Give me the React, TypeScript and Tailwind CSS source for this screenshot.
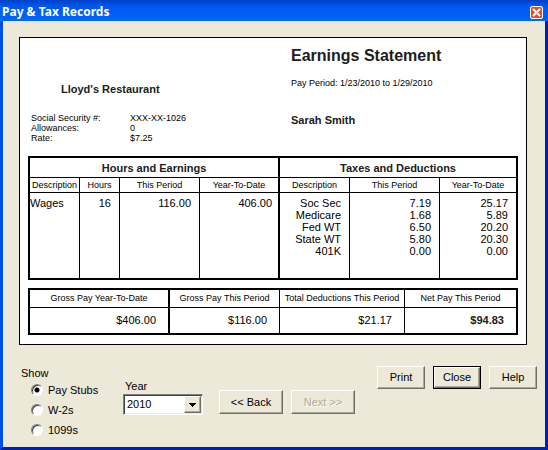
import { useState } from "react";
import type { ReactNode } from "react";

const earnings = [{ name: "Wages", hours: "16", period: "116.00", ytd: "406.00" }];

const deductions = [
  { name: "Soc Sec", period: "7.19", ytd: "25.17" },
  { name: "Medicare", period: "1.68", ytd: "5.89" },
  { name: "Fed WT", period: "6.50", ytd: "20.20" },
  { name: "State WT", period: "5.80", ytd: "20.30" },
  { name: "401K", period: "0.00", ytd: "0.00" },
];

const raised =
  "border border-t-white border-l-white border-r-[#716f64] border-b-[#716f64] shadow-[inset_-1px_-1px_0_#aca899]";

function PushButton({
  children,
  size,
  primary = false,
  disabled = false,
}: {
  children: ReactNode;
  size: string;
  primary?: boolean;
  disabled?: boolean;
}) {
  const face = `flex h-full w-full items-center justify-center bg-[#ece9d8] ${raised}`;
  const text = disabled ? "text-[#aca899] [text-shadow:1px_1px_0_white]" : "text-black";
  return (
    <button
      type="button"
      disabled={disabled}
      className={`${size} shrink-0 text-[11px] ${text} ${primary ? "border border-black" : ""}`}
    >
      <span className={face}>{children}</span>
    </button>
  );
}

function TitleBar() {
  return (
    <header className="-mx-[3px] flex h-[21px] items-center justify-between bg-linear-to-b from-[#0040c8] via-[#0058ee] via-30% to-[#0066ff] pt-[3px] pr-[5px] pl-[2px]">
      <h1 className="font-['Noto_Sans','Open_Sans',sans-serif] text-xs font-bold text-white">
        Pay &amp; Tax Records
      </h1>
      <button
        type="button"
        aria-label="Close window"
        className="flex size-[13px] items-center justify-center rounded-xs border border-white bg-[#e0502c]"
      >
        <svg viewBox="0 0 9 9" className="size-[9px]" stroke="white" strokeWidth="2">
          <path d="M1 1 L8 8 M8 1 L1 8" />
        </svg>
      </button>
    </header>
  );
}

function PayTable() {
  const line = "border-r border-black";
  const thick = "border-r-2 border-black";
  const title = "h-5 border-b border-black p-0 pt-px text-[11px] leading-4 font-bold text-[#202020]";
  const head = "h-[15px] border-b border-black p-0 text-[9px] leading-[14px] font-normal";
  return (
    <table className="w-full table-fixed border-separate border-spacing-0 border-2 border-black text-[11px] leading-3">
      <colgroup>
        <col className="w-[50px]" />
        <col className="w-[40px]" />
        <col className="w-[80px]" />
        <col className="w-[80px]" />
        <col className="w-[70px]" />
        <col className="w-[90px]" />
        <col />
      </colgroup>
      <thead>
        <tr>
          <th colSpan={4} className={`${title} ${thick}`}>Hours and Earnings</th>
          <th colSpan={3} className={title}>Taxes and Deductions</th>
        </tr>
        <tr>
          <th className={`${head} ${line}`}>Description</th>
          <th className={`${head} ${line}`}>Hours</th>
          <th className={`${head} ${line}`}>This Period</th>
          <th className={`${head} ${thick}`}>Year-To-Date</th>
          <th className={`${head} ${line}`}>Description</th>
          <th className={`${head} ${line}`}>This Period</th>
          <th className={head}>Year-To-Date</th>
        </tr>
      </thead>
      <tbody className="[&>tr:first-child>td]:pt-1 [&>tr:last-child>td]:pb-[21px]">
        {deductions.map((d, i) => {
          const e = earnings[i];
          return (
            <tr key={d.name} className="text-right">
              <td className={`${line} p-0 text-left`}>{e?.name}</td>
              <td className={`${line} p-0 pr-2`}>{e?.hours}</td>
              <td className={`${line} p-0 pr-2`}>{e?.period}</td>
              <td className={`${thick} p-0 pr-1.5`}>{e?.ytd}</td>
              <td className={`${line} p-0 pr-2`}>{d.name}</td>
              <td className={`${line} p-0 pr-2`}>{d.period}</td>
              <td className="p-0 pr-2">{d.ytd}</td>
            </tr>
          );
        })}
      </tbody>
    </table>
  );
}

function SummaryTable() {
  const head = "h-[18px] border-b border-black p-0 text-[9px] leading-[17px] font-normal whitespace-nowrap";
  const line = "border-r border-black";
  const thick = "border-r-2 border-black";
  return (
    <table className="mt-2 w-full table-fixed border-separate border-spacing-0 border-2 border-black text-[11px]">
      <colgroup>
        <col className="w-[140px]" />
        <col className="w-[110px]" />
        <col className="w-[125px]" />
        <col />
      </colgroup>
      <thead>
        <tr>
          <th className={`${head} ${thick}`}>Gross Pay Year-To-Date</th>
          <th className={`${head} ${line}`}>Gross Pay This Period</th>
          <th className={`${head} ${line}`}>Total Deductions This Period</th>
          <th className={head}>Net Pay This Period</th>
        </tr>
      </thead>
      <tbody>
        <tr className="h-[25px] text-right">
          <td className={`${thick} p-0 pr-3`}>$406.00</td>
          <td className={`${line} p-0 pr-3`}>$116.00</td>
          <td className={`${line} p-0 pr-3`}>$21.17</td>
          <td className="p-0 pr-3 font-bold text-[#202020]">$94.83</td>
        </tr>
      </tbody>
    </table>
  );
}

function Statement() {
  return (
    <section className="mx-4 mr-[18px] mt-4 border border-black bg-white px-2 pb-[9px]">
      <div className="grid h-[118px] grid-cols-[263px_1fr] text-[9px] leading-[10px]">
        <div className="pt-[43px] pl-[3px]">
          <h2 className="pl-[30px] text-[11px] leading-4 font-bold text-[#202020]">Lloyd's Restaurant</h2>
          <dl className="mt-4 grid grid-cols-[99px_1fr]">
            <dt>Social Security #:</dt>
            <dd>XXX-XX-1026</dd>
            <dt>Allowances:</dt>
            <dd>0</dd>
            <dt>Rate:</dt>
            <dd>$7.25</dd>
          </dl>
        </div>
        <div className="pt-2">
          <h2 className="text-base leading-5 font-bold text-[#202020]">Earnings Statement</h2>
          <p className="mt-3">Pay Period: 1/23/2010 to 1/29/2010</p>
          <p className="mt-6 text-[11px] leading-4 font-bold text-[#202020]">Sarah Smith</p>
        </div>
      </div>
      <PayTable />
      <SummaryTable />
    </section>
  );
}

function Controls() {
  const [show, setShow] = useState("Pay Stubs");
  return (
    <form className="flex items-start pt-[21px] pr-2 pl-[18px] text-[11px]">
      <fieldset className="w-[102px] shrink-0">
        <legend className="leading-[14px]">Show</legend>
        <div className="flex flex-col pl-[10px]">
          {["Pay Stubs", "W-2s", "1099s"].map((name) => (
            <label key={name} className="flex h-5 items-center gap-[5px]">
              <input
                type="radio"
                name="show"
                checked={show === name}
                onChange={() => setShow(name)}
                className="size-3 appearance-none rounded-full border border-t-[#808080] border-r-white border-b-white border-l-[#808080] bg-white shadow-[inset_1px_1px_0_#404040] checked:bg-[radial-gradient(circle,black_2px,white_3px)]"
              />
              {name}
            </label>
          ))}
        </div>
      </fieldset>
      <div className="w-20 shrink-0 pt-3">
        <label htmlFor="year" className="block pl-0.5 leading-4">
          Year
        </label>
        <div className="relative">
          <select
            id="year"
            defaultValue="2010"
            className="block h-[21px] w-full appearance-none rounded-none border border-t-[#808080] border-r-white border-b-white border-l-[#808080] bg-white pl-[3px] shadow-[inset_1px_1px_0_#404040,inset_-1px_-1px_0_#ece9d8]"
          >
            <option>2010</option>
          </select>
          <span
            className={`pointer-events-none absolute top-0.5 right-0.5 flex h-[17px] w-[17px] items-center justify-center bg-[#ece9d8] ${raised}`}
          >
            <svg viewBox="0 0 7 4" className="h-1 w-[7px]" shapeRendering="crispEdges">
              <path d="M0 0 H7 L3.5 4 Z" fill="black" />
            </svg>
          </span>
        </div>
      </div>
      <div className="flex gap-2 pt-6 pl-4">
        <PushButton size="h-6 w-16">&lt;&lt; Back</PushButton>
        <PushButton size="h-6 w-16" disabled>
          Next &gt;&gt;
        </PushButton>
      </div>
      <div className="ml-auto flex gap-2">
        <PushButton size="h-[23px] w-12">Print</PushButton>
        <PushButton size="h-[23px] w-12" primary>
          Close
        </PushButton>
        <PushButton size="h-[23px] w-12">Help</PushButton>
      </div>
    </form>
  );
}

export default function App() {
  return (
    <main className="flex min-h-screen flex-col border-x-[3px] border-b-[3px] border-r-[#0020b0] border-b-[#0020b0] border-l-[#0050e8] bg-[#ece9d8] font-['Liberation_Sans',Arial,sans-serif] text-black">
      <TitleBar />
      <Statement />
      <Controls />
    </main>
  );
}
